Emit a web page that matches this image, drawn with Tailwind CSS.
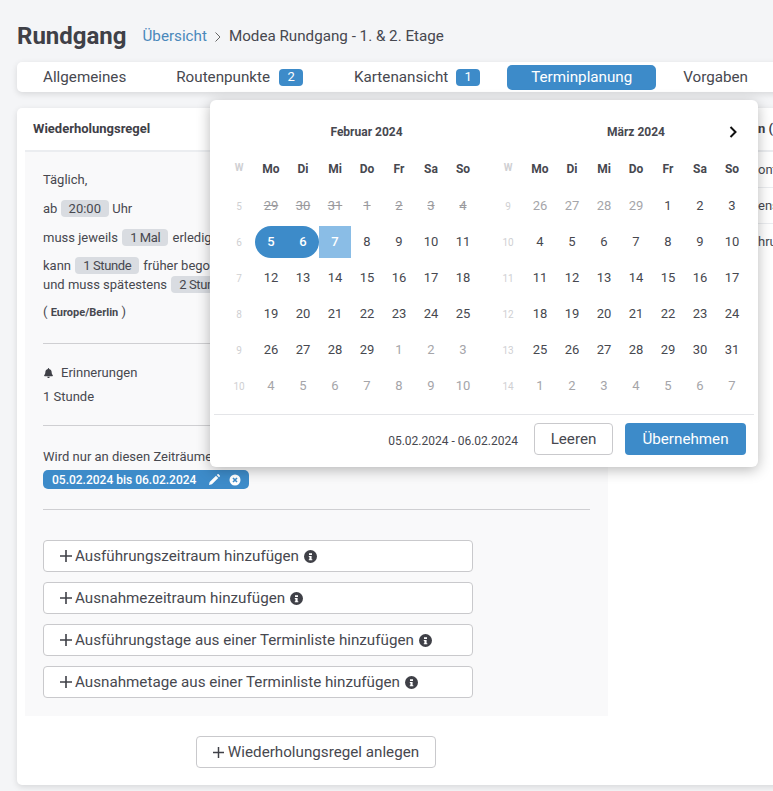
<!DOCTYPE html>
<html lang="de">
<head>
<meta charset="UTF-8">
<title>Rundgang</title>
<script src="https://cdn.jsdelivr.net/npm/@tailwindcss/browser@4"></script>
</head>
<body class="bg-[#f4f5f7] text-[#47484f] font-['Roboto',sans-serif] overflow-hidden">
<div class="relative w-[773px] h-[791px] overflow-hidden pl-[17px]">

  <!-- header -->
  <div class="flex items-center h-[62px] pt-[9px]">
    <h1 class="text-[24px] font-bold mr-[16px] text-[#3f4047]">Rundgang</h1>
    <a class="mt-[2px] text-[15.2px] text-[#4a88bb]">Übersicht</a>
    <svg class="mt-[2px] mx-[7px]" width="8" height="12" viewBox="0 0 8 12" fill="none" stroke="#666" stroke-width="1"><path d="M1.5 1.5 6 6l-4.5 4.5"/></svg>
    <span class="mt-[2px] text-[15.2px]">Modea Rundgang - 1. &amp; 2. Etage</span>
  </div>

  <!-- tabs -->
  <nav class="flex items-center h-[30px] w-[780px] bg-white rounded-[5px] shadow-[0_2px_6px_rgba(0,0,0,0.12)] text-[15.2px]">
    <a class="ml-[26px]">Allgemeines</a>
    <a class="ml-[50px]">Routenpunkte</a>
    <span class="ml-[9px] w-[24px] h-[17px] rounded-[4px] bg-[#3d8bc9] text-white text-[13px] flex items-center justify-center">2</span>
    <a class="ml-[51px]">Kartenansicht</a>
    <span class="ml-[8px] w-[24px] h-[17px] rounded-[4px] bg-[#3d8bc9] text-white text-[13px] flex items-center justify-center">1</span>
    <a class="ml-[27px] w-[149px] h-[25px] rounded-[5px] bg-[#3d8bc9] text-white flex items-center justify-center">Terminplanung</a>
    <a class="ml-[27px]">Vorgaben</a>
  </nav>

  <!-- main card, runs past the right edge -->
  <div class="flex mt-[16px] w-[780px] h-[677px] bg-white rounded-[5px] shadow-[0_2px_6px_rgba(0,0,0,0.12)]">
    <section class="w-[591px] shrink-0">
      <div class="ml-[8px] h-[44px] border-b-2 border-[#ebedf0] flex items-center pl-[8px] text-[13px] font-bold text-[#3f4047]">Wiederholungsregel</div>
      <div class="ml-[8px] h-[564px] bg-[#f9f9fa] px-[18px] text-[13px]">
        <div class="h-[192px] border-b border-[#cfcfd2] pt-[19px]">
          <p class="leading-[18px]">Täglich,</p>
          <p class="mt-[11px] leading-[18px]">ab <span class="inline-block px-[8px] rounded-[4px] bg-[#d9dce1] leading-[17px]">20:00</span> Uhr</p>
          <p class="mt-[11px] leading-[18px]">muss jeweils <span class="inline-block px-[8px] mx-[1px] rounded-[4px] bg-[#d9dce1] leading-[17px] tracking-[-0.4px]">1 Mal</span> erledigt</p>
          <p class="mt-[9px] leading-[19px]">kann <span class="inline-block px-[8px] mx-[1px] rounded-[4px] bg-[#d9dce1] leading-[17px] tracking-[-0.4px]">1 Stunde</span> früher begonnen<br>und muss spätestens <span class="inline-block px-[8px] mx-[1px] rounded-[4px] bg-[#d9dce1] leading-[17px] tracking-[-0.4px]">2 Stunden</span></p>
          <p class="mt-[9px] leading-[18px]">( <b class="text-[11px] font-bold">Europe/Berlin</b> )</p>
        </div>
        <div class="h-[82px] border-b border-[#cfcfd2] pt-[20px]">
          <p class="flex items-center leading-[18px]">
            <svg class="mr-[8px] ml-[1px]" width="9" height="10" viewBox="0 0 448 512" fill="#3f4047"><path d="M224 512c35 0 64-29 64-64H160c0 35 29 64 64 64zm216-150c-19-21-56-52-56-154 0-78-54-140-128-155V32a32 32 0 1 0-64 0v21C118 68 64 130 64 208c0 102-37 133-56 154-6 6-8 14-8 22 0 16 13 32 32 32h384c19 0 32-16 32-32 0-8-2-16-8-22z"/></svg>
            Erinnerungen
          </p>
          <p class="mt-[6px] leading-[18px]">1 Stunde</p>
        </div>
        <div class="h-[84px] border-b border-[#cfcfd2] pt-[22px]">
          <p class="leading-[18px]">Wird nur an diesen Zeiträumen ausgeführt</p>
          <span class="mt-[4px] inline-flex items-center h-[19px] w-[206px] pl-[9px] rounded-[5px] bg-[#3d8bc9] text-white text-[12px] font-medium">
            05.02.2024 bis 06.02.2024
            <svg class="ml-[13px]" width="11" height="11" viewBox="0 0 12 12" fill="#fff"><path d="M0 12l.7-3.2L7.6 1.9l2.5 2.5-6.9 6.9zM8.5 1 9.4.2c.3-.3.8-.3 1.1 0l1.3 1.3c.3.3.3.8 0 1.1l-.9.9z"/></svg>
            <svg class="ml-[9px]" width="12" height="12" viewBox="0 0 12 12"><circle cx="6" cy="6" r="5.5" fill="#fff"/><path d="M4 4l4 4M8 4l-4 4" stroke="#3d8bc9" stroke-width="1.6"/></svg>
          </span>
        </div>
        <div class="pt-[30px] flex flex-col gap-[10px] w-[430px]">
          <button class="h-[32px] flex items-center bg-white border border-[#c9c9cc] rounded-[4px] pl-[16px] text-[15.2px]">
            <svg class="mr-[3px]" width="12" height="12" viewBox="0 0 12 12" stroke="#3f4047" stroke-width="1.6"><path d="M6 0v12M0 6h12"/></svg>Ausführungszeitraum hinzufügen
            <svg class="ml-[5px]" width="13" height="13" viewBox="0 0 13 13"><circle cx="6.5" cy="6.5" r="6.5" fill="#3f4047"/><path d="M5 3.2h3v1.9H5zM5.4 6h2.2v3.2h.7v1H4.8v-1h.6V7h-.6V6z" fill="#fff"/></svg>
          </button>
          <button class="h-[32px] flex items-center bg-white border border-[#c9c9cc] rounded-[4px] pl-[16px] text-[15.2px]">
            <svg class="mr-[3px]" width="12" height="12" viewBox="0 0 12 12" stroke="#3f4047" stroke-width="1.6"><path d="M6 0v12M0 6h12"/></svg>Ausnahmezeitraum hinzufügen
            <svg class="ml-[5px]" width="13" height="13" viewBox="0 0 13 13"><circle cx="6.5" cy="6.5" r="6.5" fill="#3f4047"/><path d="M5 3.2h3v1.9H5zM5.4 6h2.2v3.2h.7v1H4.8v-1h.6V7h-.6V6z" fill="#fff"/></svg>
          </button>
          <button class="h-[32px] flex items-center bg-white border border-[#c9c9cc] rounded-[4px] pl-[16px] text-[15.2px]">
            <svg class="mr-[3px]" width="12" height="12" viewBox="0 0 12 12" stroke="#3f4047" stroke-width="1.6"><path d="M6 0v12M0 6h12"/></svg>Ausführungstage aus einer Terminliste hinzufügen
            <svg class="ml-[5px]" width="13" height="13" viewBox="0 0 13 13"><circle cx="6.5" cy="6.5" r="6.5" fill="#3f4047"/><path d="M5 3.2h3v1.9H5zM5.4 6h2.2v3.2h.7v1H4.8v-1h.6V7h-.6V6z" fill="#fff"/></svg>
          </button>
          <button class="h-[32px] flex items-center bg-white border border-[#c9c9cc] rounded-[4px] pl-[16px] text-[15.2px]">
            <svg class="mr-[3px]" width="12" height="12" viewBox="0 0 12 12" stroke="#3f4047" stroke-width="1.6"><path d="M6 0v12M0 6h12"/></svg>Ausnahmetage aus einer Terminliste hinzufügen
            <svg class="ml-[5px]" width="13" height="13" viewBox="0 0 13 13"><circle cx="6.5" cy="6.5" r="6.5" fill="#3f4047"/><path d="M5 3.2h3v1.9H5zM5.4 6h2.2v3.2h.7v1H4.8v-1h.6V7h-.6V6z" fill="#fff"/></svg>
          </button>
        </div>
      </div>
      <div class="pt-[20px] pl-[179px]">
        <button class="h-[32px] w-[240px] flex items-center justify-center bg-white border border-[#c9c9cc] rounded-[4px] text-[15.2px]">
          <svg class="mr-[4px]" width="11" height="11" viewBox="0 0 12 12" stroke="#3f4047" stroke-width="1.6"><path d="M6 0v12M0 6h12"/></svg>Wiederholungsregel anlegen
        </button>
      </div>
    </section>

    <!-- right column, mostly behind the popover -->
    <section class="ml-[16px] flex-1 text-[13px]">
      <div class="h-[44px] border-b-2 border-[#ebedf0] flex items-center pl-[134px] font-bold whitespace-nowrap text-[#3f4047]">n (</div>
      <div class="h-[36px] border-b border-[#ebedf0] flex items-center pl-[134px]">ont</div>
      <div class="h-[36px] border-b border-[#ebedf0] flex items-center pl-[134px]">ens</div>
      <div class="h-[36px] flex items-center pl-[134px]">hru</div>
    </section>
  </div>

  <!-- date picker popover -->
  <div class="absolute left-[210px] top-[100px] w-[548px] h-[367px] bg-white rounded-[6px] shadow-[0_3px_14px_rgba(0,0,0,0.28)]">
    <div class="flex pl-[13px]">
      <div class="w-[269px]">
        <div class="h-[60px] pt-[24px] pl-[18px] text-center text-[12px] font-bold leading-[16px]">Februar 2024</div>
        <div class="grid grid-cols-[32px_repeat(7,32px)] text-center text-[13px]">
          <div class="h-[18px] text-[10px] font-bold text-[#cfd0d3]">W</div><div class="font-bold text-[12px]">Mo</div><div class="font-bold text-[12px]">Di</div><div class="font-bold text-[12px]">Mi</div><div class="font-bold text-[12px]">Do</div><div class="font-bold text-[12px]">Fr</div><div class="font-bold text-[12px]">Sa</div><div class="font-bold text-[12px]">So</div>
        </div>
        <div class="grid grid-cols-[32px_repeat(7,32px)] auto-rows-[36px] mt-[10px] items-center text-center text-[13px]">
          <div class="text-[10px] text-[#cfd0d3]">5</div><div class="line-through text-[#9a9a9e]">29</div><div class="line-through text-[#9a9a9e]">30</div><div class="line-through text-[#9a9a9e]">31</div><div class="line-through text-[#9a9a9e]">1</div><div class="line-through text-[#9a9a9e]">2</div><div class="line-through text-[#9a9a9e]">3</div><div class="line-through text-[#9a9a9e]">4</div>
          <div class="text-[10px] text-[#cfd0d3]">6</div><div class="h-[32px] leading-[32px] bg-[#3d8bc9] text-white font-medium rounded-l-full">5</div><div class="h-[32px] leading-[32px] bg-[#3d8bc9] text-white font-medium rounded-r-full">6</div><div class="h-[32px] leading-[32px] bg-[#8abde6] text-white font-medium">7</div><div>8</div><div>9</div><div>10</div><div>11</div>
          <div class="text-[10px] text-[#cfd0d3]">7</div><div>12</div><div>13</div><div>14</div><div>15</div><div>16</div><div>17</div><div>18</div>
          <div class="text-[10px] text-[#cfd0d3]">8</div><div>19</div><div>20</div><div>21</div><div>22</div><div>23</div><div>24</div><div>25</div>
          <div class="text-[10px] text-[#cfd0d3]">9</div><div>26</div><div>27</div><div>28</div><div>29</div><div class="text-[#a5a5a9]">1</div><div class="text-[#a5a5a9]">2</div><div class="text-[#a5a5a9]">3</div>
          <div class="text-[10px] text-[#cfd0d3]">10</div><div class="text-[#a5a5a9]">4</div><div class="text-[#a5a5a9]">5</div><div class="text-[#a5a5a9]">6</div><div class="text-[#a5a5a9]">7</div><div class="text-[#a5a5a9]">8</div><div class="text-[#a5a5a9]">9</div><div class="text-[#a5a5a9]">10</div>
        </div>
      </div>
      <div class="w-[256px] relative">
        <div class="h-[60px] pt-[24px] pl-[32px] text-center text-[12px] font-bold leading-[16px]">März 2024</div>
        <svg class="absolute right-[10px] top-[26px]" width="9" height="12" viewBox="0 0 9 12" fill="none" stroke="#111" stroke-width="2"><path d="M1.5 1 6.5 6l-5 5"/></svg>
        <div class="grid grid-cols-[32px_repeat(7,32px)] text-center text-[13px]">
          <div class="h-[18px] text-[10px] font-bold text-[#cfd0d3]">W</div><div class="font-bold text-[12px]">Mo</div><div class="font-bold text-[12px]">Di</div><div class="font-bold text-[12px]">Mi</div><div class="font-bold text-[12px]">Do</div><div class="font-bold text-[12px]">Fr</div><div class="font-bold text-[12px]">Sa</div><div class="font-bold text-[12px]">So</div>
        </div>
        <div class="grid grid-cols-[32px_repeat(7,32px)] auto-rows-[36px] mt-[10px] items-center text-center text-[13px]">
          <div class="text-[10px] text-[#cfd0d3]">9</div><div class="text-[#a5a5a9]">26</div><div class="text-[#a5a5a9]">27</div><div class="text-[#a5a5a9]">28</div><div class="text-[#a5a5a9]">29</div><div>1</div><div>2</div><div>3</div>
          <div class="text-[10px] text-[#cfd0d3]">10</div><div>4</div><div>5</div><div>6</div><div>7</div><div>8</div><div>9</div><div>10</div>
          <div class="text-[10px] text-[#cfd0d3]">11</div><div>11</div><div>12</div><div>13</div><div>14</div><div>15</div><div>16</div><div>17</div>
          <div class="text-[10px] text-[#cfd0d3]">12</div><div>18</div><div>19</div><div>20</div><div>21</div><div>22</div><div>23</div><div>24</div>
          <div class="text-[10px] text-[#cfd0d3]">13</div><div>25</div><div>26</div><div>27</div><div>28</div><div>29</div><div>30</div><div>31</div>
          <div class="text-[10px] text-[#cfd0d3]">14</div><div class="text-[#a5a5a9]">1</div><div class="text-[#a5a5a9]">2</div><div class="text-[#a5a5a9]">3</div><div class="text-[#a5a5a9]">4</div><div class="text-[#a5a5a9]">5</div><div class="text-[#a5a5a9]">6</div><div class="text-[#a5a5a9]">7</div>
        </div>
      </div>
    </div>
    <div class="mx-[4px] mt-[10px] h-[41px] border-t border-[#e4e5e8] flex items-center justify-end pr-[8px] pt-[8px]">
      <span class="mt-[3px] text-[12px] mr-[16px]">05.02.2024 - 06.02.2024</span>
      <button class="w-[79px] h-[32px] border border-[#c9c9cc] rounded-[4px] text-[15.2px] mr-[12px]">Leeren</button>
      <button class="w-[121px] h-[32px] bg-[#3d8bc9] text-white rounded-[4px] text-[15.2px]">Übernehmen</button>
    </div>
  </div>
</div>
</body>
</html>
